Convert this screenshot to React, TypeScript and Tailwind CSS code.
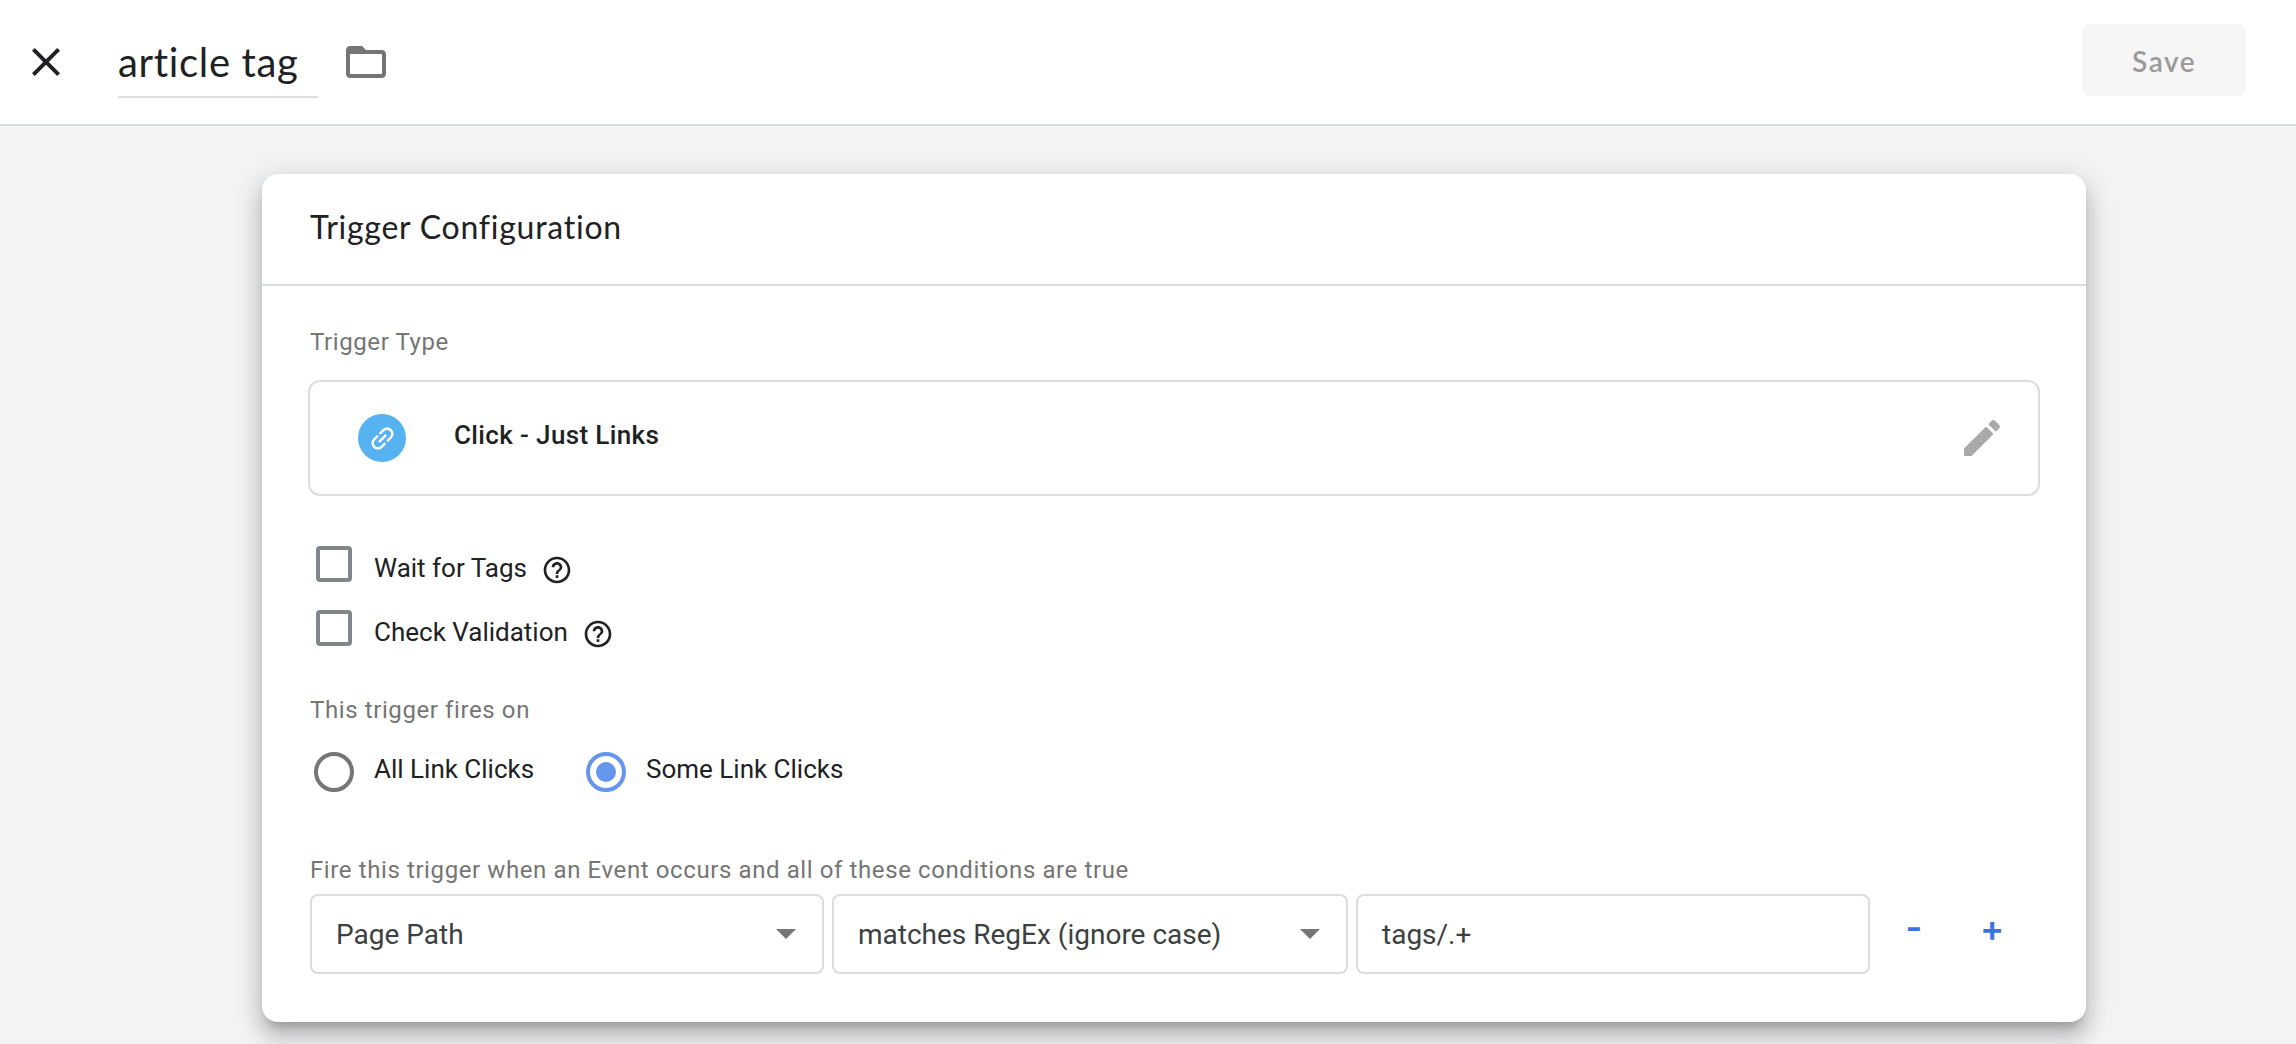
import React from 'react';

const CARD_SHADOW =
  'shadow-[0_10px_10px_-6px_rgba(0,0,0,0.2),0_16px_20px_2px_rgba(0,0,0,0.14),0_6px_28px_4px_rgba(0,0,0,0.12)]';

function Icon({ d, className }: { d: string; className: string }) {
  return (
    <svg viewBox="0 0 24 24" fill="currentColor" className={className} aria-hidden="true">
      <path d={d} />
    </svg>
  );
}

const icons = {
  close:
    'M19 6.41L17.59 5 12 10.59 6.41 5 5 6.41 10.59 12 5 17.59 6.41 19 12 13.41 17.59 19 19 17.59 13.41 12z',
  folder:
    'M20 6h-8l-2-2H4c-1.1 0-1.99.9-1.99 2L2 18c0 1.1.9 2 2 2h16c1.1 0 2-.9 2-2V8c0-1.1-.9-2-2-2zm0 12H4V8h16v10z',
  edit:
    'M3 17.25V21h3.75L17.81 9.94l-3.75-3.75L3 17.25zM20.71 7.04c.39-.39.39-1.02 0-1.41l-2.34-2.34c-.39-.39-1.02-.39-1.41 0l-1.83 1.83 3.75 3.75 1.83-1.83z',
  help:
    'M11 18h2v-2h-2v2zm1-16C6.48 2 2 6.48 2 12s4.48 10 10 10 10-4.48 10-10S17.52 2 12 2zm0 18c-4.41 0-8-3.59-8-8s3.59-8 8-8 8 3.59 8 8-3.59 8-8 8zm0-14c-2.21 0-4 1.79-4 4h2c0-1.1.9-2 2-2s2 .9 2 2c0 2-3 1.75-3 5h2c0-2.25 3-2.5 3-5 0-2.21-1.79-4-4-4z',
};

function Header() {
  return (
    <header className="flex h-[126px] items-start border-b-2 border-[#dadce0] bg-white font-[Lato,sans-serif]">
      <button className="mt-[38px] ml-[22px]">
        <Icon d={icons.close} className="size-12 text-[#202124]" />
      </button>
      <div className="mt-[34px] ml-12 h-16 w-[200px] border-b-2 border-[#dadce0] text-[40px] leading-[56px] tracking-[0.66px] whitespace-nowrap text-[#202124]">
        article tag
      </div>
      <Icon d={icons.folder} className="mt-[38px] ml-6 size-12 text-[#757575]" />
      <button className="mt-6 mr-[50px] ml-auto h-[72px] w-[164px] rounded-lg bg-[#f6f6f6] pl-[50px] text-left text-[28px] leading-[75px] font-semibold tracking-[1.6px] text-[#9b9b9b]">
        Save
      </button>
    </header>
  );
}

function Label({ children, className }: { children: React.ReactNode; className: string }) {
  return (
    <div className={`ml-[2px] text-2xl leading-10 tracking-[0.6px] text-[#757575] ${className}`}>{children}</div>
  );
}

function CheckRow({ label, className }: { label: string; className: string }) {
  return (
    <div className="flex h-16 items-center pl-2">
      <span className="size-9 rounded-[4px] border-4 border-[#80868b]" />
      <span className={`mt-2 ml-[22px] text-[26px] leading-8 ${className}`}>{label}</span>
      <Icon d={icons.help} className="mt-3 ml-[14px] size-8" />
    </div>
  );
}

function Radio({ label, checked }: { label: string; checked?: boolean }) {
  return (
    <div className="flex w-[272px] items-center gap-5 whitespace-nowrap">
      <span
        className={`flex size-10 shrink-0 items-center justify-center rounded-full border-4 ${
          checked ? 'border-[#6695ee]' : 'border-[#757575]'
        }`}
      >
        {checked && <span className="size-5 rounded-full bg-[#6695ee]" />}
      </span>
      <span className="mb-[6px] text-[26px] leading-8">{label}</span>
    </div>
  );
}

function Field({ value, menu, className }: { value: string; menu?: boolean; className: string }) {
  return (
    <div
      className={`flex h-20 items-center justify-between rounded-lg border-2 border-[#dadce0] pr-[26px] pl-6 text-[28px] text-[#3c4043] ${className}`}
    >
      <span className="pt-[2px]">{value}</span>
      {menu && (
        <svg viewBox="0 0 20 10" className="h-[10px] w-5" fill="#757575" aria-hidden="true">
          <path d="M0 0h20L10 10z" />
        </svg>
      )}
    </div>
  );
}

export default function App() {
  return (
    <div className="h-[1044px] overflow-hidden bg-[#f1f3f4] font-[Roboto,sans-serif] text-[#202124]">
      <Header />
      <main className={`mt-12 ml-[262px] h-[848px] w-[1824px] rounded-2xl bg-white ${CARD_SHADOW}`}>
        <h1 className="flex h-[112px] items-center border-b-2 border-[#dadce0] pb-[5px] pl-12 font-[Lato,sans-serif] text-[32px] tracking-[0.75px]">
          Trigger Configuration
        </h1>
        <div className="px-[46px] pt-9">
          <Label className="">Trigger Type</Label>
          <div className="mt-[18px] flex h-[116px] items-center rounded-xl border-2 border-[#dadce0] pr-8 pl-12">
            <span className="flex size-12 items-center justify-center rounded-full bg-[#56b2f0]">
              <svg viewBox="0 0 24 24" className="size-[31px] -rotate-45" fill="white" aria-hidden="true">
                <path d="M3.9 12c0-1.71 1.39-3.1 3.1-3.1h4V7H7c-2.76 0-5 2.24-5 5s2.24 5 5 5h4v-1.9H7c-1.71 0-3.1-1.39-3.1-3.1zM8 13h8v-2H8v2zm9-6h-4v1.9h4c1.71 0 3.1 1.39 3.1 3.1s-1.39 3.1-3.1 3.1h-4V17h4c2.76 0 5-2.24 5-5s-2.24-5-5-5z" />
              </svg>
            </span>
            <span className="mb-[6px] ml-12 text-[26px] leading-8 font-medium tracking-[0.37px]">
              Click - Just Links
            </span>
            <button className="ml-auto">
              <Icon d={icons.edit} className="size-12 text-[#aaaaaa]" />
            </button>
          </div>

          <div className="mt-9">
            <CheckRow label="Wait for Tags" className="tracking-normal" />
            <CheckRow label="Check Validation" className="tracking-normal" />
          </div>

          <Label className="mt-[30px]">This trigger fires on</Label>
          <div className="mt-[22px] flex pl-[6px]">
            <Radio label="All Link Clicks" />
            <Radio label="Some Link Clicks" checked />
          </div>

          <Label className="mt-[58px]">
            Fire this trigger when an Event occurs and all of these conditions are true
          </Label>
          <div className="mt-1 ml-[2px] flex gap-2">
            <Field value="Page Path" menu className="w-[514px]" />
            <Field value="matches RegEx (ignore case)" menu className="w-[516px]" />
            <Field value="tags/.+" className="w-[514px]" />
            <div className="-ml-1 flex h-[68px] items-center font-[Inter,sans-serif] text-[36px] font-semibold text-[#3474e0]">
              <button className="w-20 pb-[2px] text-center">-</button>
              <button className="w-[76px] text-center">+</button>
            </div>
          </div>
        </div>
      </main>
    </div>
  );
}
